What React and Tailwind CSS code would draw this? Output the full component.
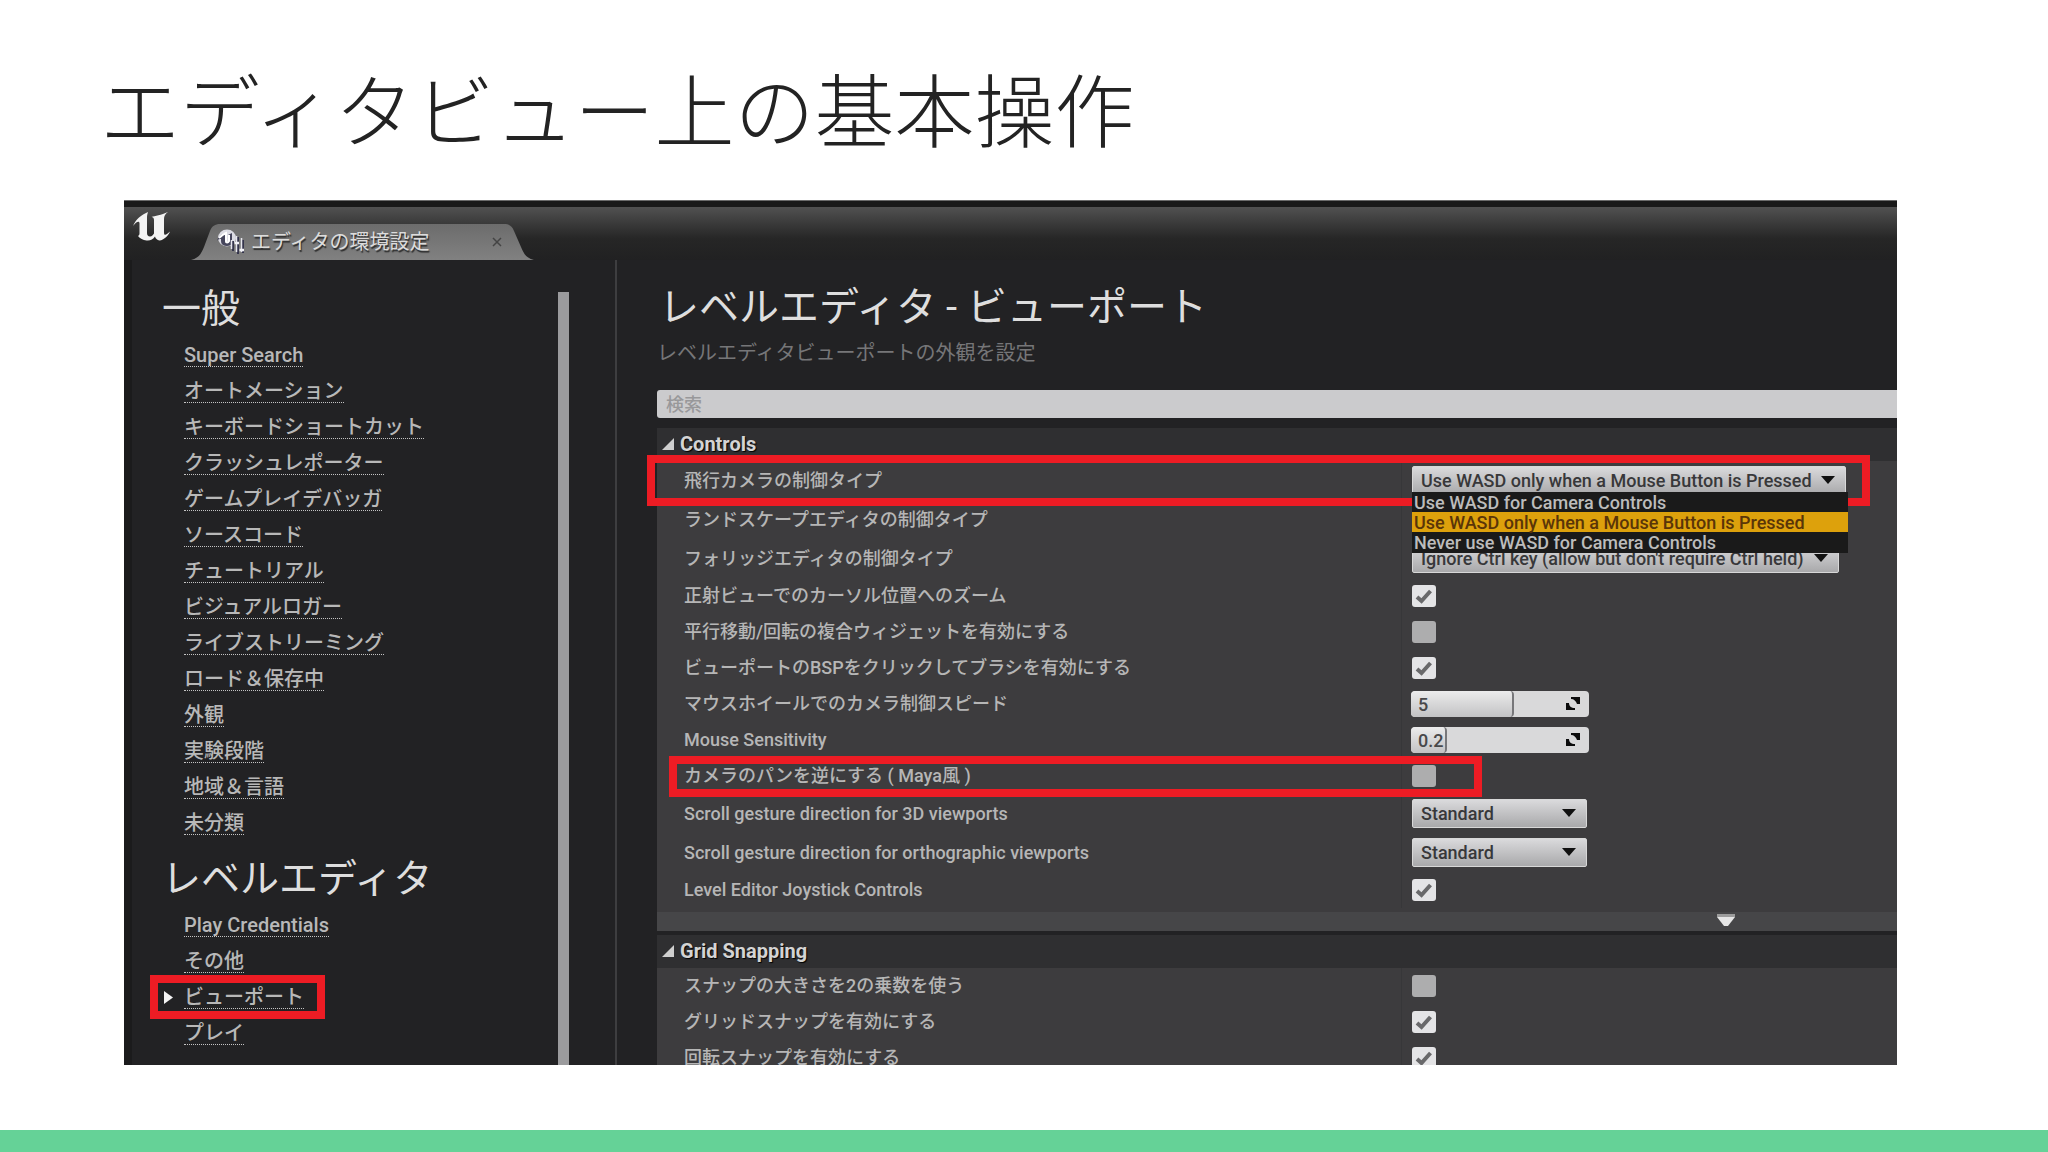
import { useState } from 'react';

const generalLinks = [
    'Super Search',
    'オートメーション',
    'キーボードショートカット',
    'クラッシュレポーター',
    'ゲームプレイデバッガ',
    'ソースコード',
    'チュートリアル',
    'ビジュアルロガー',
    'ライブストリーミング',
    'ロード＆保存中',
    '外観',
    '実験段階',
    '地域＆言語',
    '未分類',
];

const levelEditorLinks = ['Play Credentials', 'その他', 'ビューポート', 'プレイ'];

const wasdOptions = [
    'Use WASD for Camera Controls',
    'Use WASD only when a Mouse Button is Pressed',
    'Never use WASD for Camera Controls',
];

const controlRows = [
    { id: 'flight', label: '飛行カメラの制御タイプ', type: 'menu', tall: true, mark: 'wide' },
    { id: 'landscape', label: 'ランドスケープエディタの制御タイプ', type: 'none', tall: true },
    { id: 'foliage', label: 'フォリッジエディタの制御タイプ', type: 'select', tall: true, wide: true, value: "Ignore Ctrl key (allow but don't require Ctrl held)" },
    { id: 'ortho-zoom', label: '正射ビューでのカーソル位置へのズーム', type: 'check', value: true },
    { id: 'combined', label: '平行移動/回転の複合ウィジェットを有効にする', type: 'check', value: false },
    { id: 'bsp', label: 'ビューポートのBSPをクリックしてブラシを有効にする', type: 'check', value: true },
    { id: 'wheel', label: 'マウスホイールでのカメラ制御スピード', type: 'spin', value: '5', fill: 58 },
    { id: 'sensitivity', label: 'Mouse Sensitivity', type: 'spin', value: '0.2', fill: 20 },
    { id: 'invert-pan', label: 'カメラのパンを逆にする ( Maya風 )', type: 'check', value: false, mark: 'narrow' },
    { id: 'scroll-3d', label: 'Scroll gesture direction for 3D viewports', type: 'select', tall: true, value: 'Standard' },
    { id: 'scroll-ortho', label: 'Scroll gesture direction for orthographic viewports', type: 'select', tall: true, value: 'Standard' },
    { id: 'joystick', label: 'Level Editor Joystick Controls', type: 'check', value: true },
];

const gridRows = [
    { id: 'power2', label: 'スナップの大きさを2の乗数を使う', type: 'check', value: false },
    { id: 'grid-snap', label: 'グリッドスナップを有効にする', type: 'check', value: true },
    { id: 'rot-snap', label: '回転スナップを有効にする', type: 'check', value: true },
];

function UnrealLogo() {
    return (
        <svg viewBox="0 0 38 30" className="ml-[9px] mt-[5px] h-[30px] w-[38px] shrink-0" fill="#f4f4f4" aria-hidden="true">
            <path d="M0 14C3 7 8 3 15 0C14 3 14 4 14 6V21C14 23 15 24.5 17 24.5C19 24.5 20 23 21 21.5V8C21 6 20 5 18.500 5C22 4 28 3 35 0C32 2 31 4 31 7V20C31 23 32 23.5 34 22L37 19.5C35 24 31 28 26.5 28.5C24 28 22.5 26.5 22 24.5C20 27.5 17 29 13.5 28.5C10 28 7 26.5 5 24C6 23.5 6.500 22.5 6.500 21.5V11C6 8.5 3 10 0 14Z" />
        </svg>
    );
}

function TabIcon() {
    return (
        <svg viewBox="0 0 28 26" className="h-[26px] w-7 shrink-0" aria-hidden="true">
            <ellipse cx="10" cy="9" rx="9" ry="8.5" fill="#dcdce4" />
            <path d="M0 12C1 8 4 5 8 4V12C8 14 10 14 11 12V6L15 4V14C15 17 9 18 6 16C4 15 4 13 4 10C3 10 1 10 0 12Z" fill="#46465c" />
            <path d="M2 9C4 7 6 5 9 4V12C9 14 11 14 12 12V6" fill="none" stroke="#fff" strokeWidth="2" />
            <path d="M16 12V22M21 8V25M26 11V24" stroke="#34344c" strokeWidth="2" />
            <path d="M14.5 11V20M19.500 7V23M24.5 9V23" stroke="#e6e6ee" strokeWidth="1.5" />
            <path d="M17.500 14H22M22.5 21H27" stroke="#f2f2f8" strokeWidth="2.5" />
        </svg>
    );
}

function TitleBar() {
    return (
        <header className="flex h-[53px] shrink-0 items-start bg-linear-to-b from-[#515151] from-0% via-[#262626] via-60% to-[#212122]">
            <UnrealLogo />
            <div className="relative ml-5 mt-[17px] flex h-9 w-[343px] items-center pl-[26px]">
                <svg viewBox="0 0 343 36" preserveAspectRatio="none" className="absolute inset-0 h-full w-full" aria-hidden="true">
                    <defs>
                        <linearGradient id="tab" x1="0" y1="0" x2="0" y2="1">
                            <stop offset="0" stopColor="#6c6c6c" />
                            <stop offset="1" stopColor="#818181" />
                        </linearGradient>
                    </defs>
                    <path d="M0 36C8 34 10 30 13 23L19 7C21 2 24 0 29 0H313C318 0 321 2 323 7L330 23C333 30 335 34 343 36Z" fill="url(#tab)" />
                </svg>
                <div className="relative flex flex-1 items-center gap-[6px]">
                    <TabIcon />
                    <span className="text-[20px] leading-6 text-[#dcdcdc] [text-shadow:1px_2px_1px_#2c2c2c]">エディタの環境設定</span>
                </div>
                <button type="button" aria-label="閉じる" className="relative mr-8">
                    <svg viewBox="0 0 10 10" className="h-[10px] w-[10px]" stroke="#444" strokeWidth="1.5">
                        <path d="M1 1L9 9M9 1L1 9" />
                    </svg>
                </button>
            </div>
        </header>
    );
}

function NavGroup({ title, links, active }) {
    return (
        <section>
            <h2 className="h-[56px] pl-[30px] text-[39px] leading-[56px] text-[#dedede]">{title}</h2>
            <ul className="pl-[52px]">
                {links.map((name) => (
                    <li key={name} className="relative flex h-9 items-center">
                        {name === active && (
                            <>
                                <span className="absolute -left-[34px] -top-1 h-[44px] w-[175px] border-8 border-[#ed1c24]" />
                                <svg viewBox="0 0 9 13" className="absolute -left-5 h-[13px] w-[9px]" fill="#f4f4f4" aria-hidden="true">
                                    <path d="M0 0L9 6.5L0 13Z" />
                                </svg>
                            </>
                        )}
                        <a href="#" className="border-b border-dotted border-[#c4c4c4] text-[20px] font-medium leading-[22px] text-[#b8b8b8]">{name}</a>
                    </li>
                ))}
            </ul>
        </section>
    );
}

function Sidebar() {
    return (
        <nav className="flex w-[485px] shrink-0 border-r-2 border-[#3e3e40]">
            <div className="flex w-[426px] flex-col gap-[10px] pt-[21px]">
                <NavGroup title="一般" links={generalLinks} />
                <NavGroup title="レベルエディタ" links={levelEditorLinks} active="ビューポート" />
            </div>
            <div className="mt-8 w-[11px] bg-[#9b9b9d]" />
        </nav>
    );
}

function Arrow({ className }) {
    return (
        <svg viewBox="0 0 14 8" className={`pointer-events-none h-2 w-[14px] ${className}`} fill="#111" aria-hidden="true">
            <path d="M0 0H14L7 8Z" />
        </svg>
    );
}

function Combo({ id, value, width }) {
    return (
        <div className={`relative ${width}`}>
            <select
                id={id}
                className="block h-[29px] w-full appearance-none rounded-xs border border-[#d8d8d8] bg-linear-to-b from-[#dadadc] to-[#a9a9ab] pl-2 text-[18px] font-medium leading-6 text-[#38383a]"
            >
                <option>{value}</option>
            </select>
            <Arrow className="absolute right-[11px] top-[10px]" />
        </div>
    );
}

function FlightMenu({ id }) {
    const [selected, setSelected] = useState(1);

    return (
        <div className="relative w-[434px]">
            <Combo id={id} value={wasdOptions[selected]} width="w-[434px]" />
            <ul role="listbox" aria-label="飛行カメラの制御タイプ" className="absolute left-0 top-[26px] z-20 w-[436px] border-b border-[#1a1a1a] bg-[#1a1a1a]">
                {wasdOptions.map((name, i) => (
                    <li
                        key={name}
                        role="option"
                        aria-selected={i === selected}
                        onClick={() => setSelected(i)}
                        className={`h-5 whitespace-nowrap pl-[2px] text-[18px] font-medium leading-[22px] ${i === selected ? 'bg-[#dda10c] text-[#5a3508]' : 'text-[#bcbcbc]'}`}
                    >
                        {name}
                    </li>
                ))}
            </ul>
        </div>
    );
}

function Check({ id, value }) {
    return (
        <div className="relative h-[22px] w-6">
            <input
                id={id}
                type="checkbox"
                defaultChecked={value}
                className="peer block h-[22px] w-6 appearance-none rounded-[3px] bg-[#adadae] checked:bg-[#e4e4e6]"
            />
            <svg viewBox="0 0 24 22" className="pointer-events-none absolute inset-0 hidden h-[22px] w-6 peer-checked:block" fill="none" stroke="#69696b" strokeWidth="4" aria-hidden="true">
                <path d="M5 12L9.5 16L18.500 6" />
            </svg>
        </div>
    );
}

function Spin({ id, value, fill }) {
    return (
        <div className="relative -ml-px h-[26px] w-[178px] overflow-hidden rounded-[4px] bg-[#d9d9da]">
            <div
                className="absolute inset-y-0 left-0 rounded-[4px] border-r-2 border-[#77777a] bg-linear-to-b from-[#ececec] to-[#c2c2c4]"
                style={{ width: `${fill}%` }}
            />
            <input id={id} type="text" defaultValue={value} className="relative block h-full w-full bg-transparent pl-[7px] text-[18px] font-medium leading-6 text-[#48484a]" />
            <svg viewBox="0 0 14 13" className="absolute right-[9px] top-[6px] h-[13px] w-[14px]" fill="#0c0c0c" aria-hidden="true">
                <path d="M5 0H14V7L11 7C10 4 8 2 5 2ZM0 6H3C3 9 5 11 9 11V13H0Z" />
            </svg>
        </div>
    );
}

function Field({ row }) {
    if (row.type === 'menu') return <FlightMenu id={row.id} />;
    if (row.type === 'select') return <Combo id={row.id} value={row.value} width={row.wide ? 'w-[427px]' : 'w-[175px]'} />;
    if (row.type === 'check') return <Check id={row.id} value={row.value} />;
    if (row.type === 'spin') return <Spin id={row.id} value={row.value} fill={row.fill} />;
    return null;
}

function Row({ row }) {
    return (
        <div className={`relative grid grid-cols-[3fr_2fr] ${row.tall ? 'h-[39px]' : 'h-9'}`}>
            <div className="flex items-center pl-[27px]">
                <label htmlFor={row.id} className="whitespace-nowrap text-[18px] font-medium leading-6 text-[#b6b6b6]">{row.label}</label>
            </div>
            <div className="flex items-center border-l border-[#373739] pl-[10px]">
                <Field row={row} />
            </div>
            {row.mark === 'wide' && (
                <span className="pointer-events-none absolute -bottom-[6px] -left-[10px] -top-[6px] right-[27px] z-10 border-8 border-[#ed1c24]" />
            )}
            {row.mark === 'narrow' && (
                <span className="pointer-events-none absolute -bottom-[3px] -top-[2px] left-3 right-[415px] z-10 border-8 border-[#ed1c24]" />
            )}
        </div>
    );
}

function SectionHeader({ title }) {
    return (
        <h3 className="h-[33px] bg-[#2f2f31]">
            <button type="button" className="flex h-8 items-center gap-[6px] pl-[5px] text-[20px] font-bold leading-6 text-[#d4d4d4] [text-shadow:1px_1px_1px_#000]">
                <svg viewBox="0 0 12 12" className="h-3 w-3" fill="#cfcfcf" aria-hidden="true">
                    <path d="M12 0V12H0Z" />
                </svg>
                {title}
            </button>
        </h3>
    );
}

function Details() {
    return (
        <main className="min-w-0 flex-1 pl-10 pt-5">
            <h1 className="h-[56px] pl-[2px] text-[40px] leading-[56px] text-[#dedede]">レベルエディタ - ビューポート</h1>
            <p className="pt-[3px] text-[20px] leading-7 text-[#767678]">レベルエディタビューポートの外観を設定</p>
            <input
                type="search"
                placeholder="検索"
                aria-label="検索"
                className="mt-[23px] block h-7 w-full rounded-l-[3px] bg-[#cbcbcd] pl-[9px] text-[18px] font-medium placeholder:text-[#98989a]"
            />
            <section className="mt-[10px] bg-[#3d3c3e]">
                <SectionHeader title="Controls" />
                {controlRows.map((row) => (
                    <Row key={row.id} row={row} />
                ))}
                <button type="button" aria-label="詳細を表示" className="mt-1 grid h-[19px] w-full grid-cols-[1069fr_171fr] items-start bg-[#464648] pt-[2px]">
                    <svg viewBox="0 0 18 12" className="-mr-[9px] h-3 w-[18px] justify-self-end" aria-hidden="true">
                        <path d="M0 0H18V3L11 12H7L0 3Z" fill="#e6e6e6" />
                        <path d="M0 0H18V3H0Z" fill="#9c9c9c" />
                    </svg>
                </button>
            </section>
            <section className="mt-1 bg-[#3d3c3e]">
                <SectionHeader title="Grid Snapping" />
                {gridRows.map((row) => (
                    <Row key={row.id} row={row} />
                ))}
            </section>
        </main>
    );
}

export default function App() {
    return (
        <div className="flex h-screen flex-col bg-white font-['Roboto','Noto_Sans_CJK_JP',sans-serif]">
            <div className="flex h-[200px] shrink-0 items-center pl-[100px] pt-3">
                <h1 className="whitespace-nowrap font-['Noto_Sans_CJK_JP',sans-serif] text-[80px] font-light leading-[100px] text-[#232323]">エディタビュー上の基本操作</h1>
            </div>
            <div className="mb-[65px] ml-[124px] mr-[151px] flex min-h-0 flex-1 flex-col overflow-hidden border-t border-[#6a6a6a] bg-[#222224]">
                <div className="h-[6px] shrink-0 bg-[#191919]" />
                <TitleBar />
                <div className="flex min-h-0 flex-1 border-l-8 border-[#1b1b1c]">
                    <Sidebar />
                    <Details />
                </div>
            </div>
            <footer className="h-[22px] shrink-0 bg-[#65d297]" />
        </div>
    );
}
